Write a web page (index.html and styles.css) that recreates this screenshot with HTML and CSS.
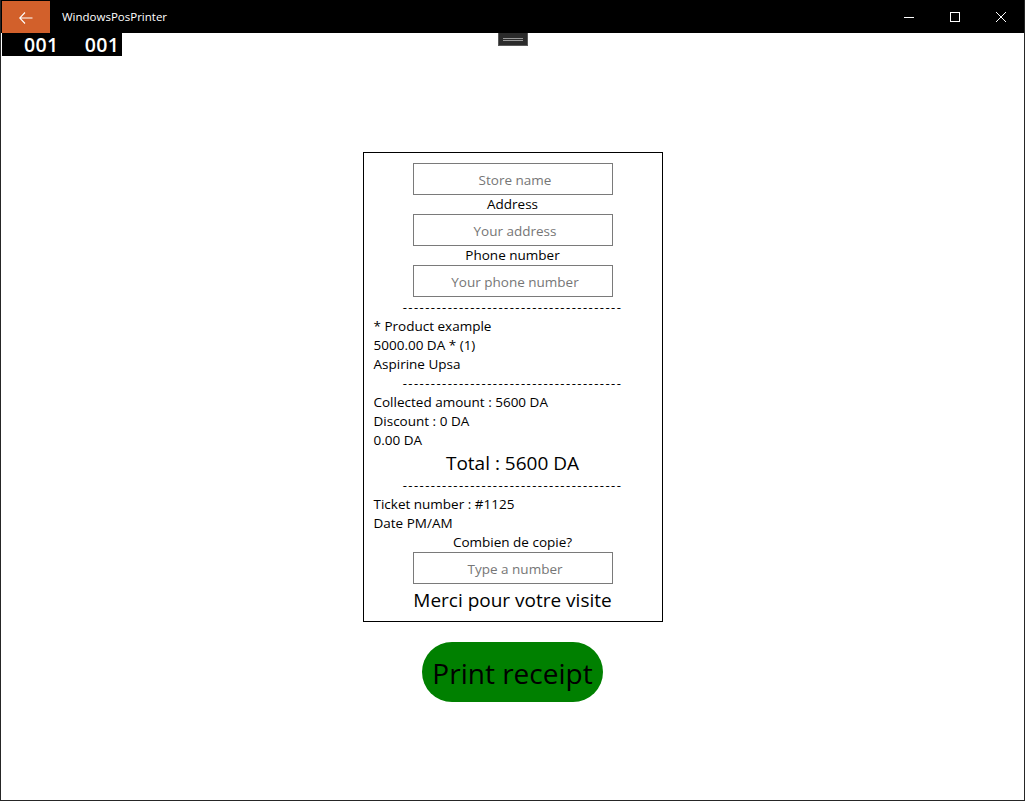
FILE: index.html
```html
<!DOCTYPE html>
<html>
<head>
<meta charset="utf-8">
<link rel="stylesheet" href="styles.css">
</head>
<body>
<div class="window">
  <header class="titlebar">
    <div class="back">
      <svg width="14" height="12" viewBox="0 0 14 12"><path d="M6 0.5 L0.7 6 L6 11.5 M0.7 6 H13.5" fill="none" stroke="#fff" stroke-width="1.1"/></svg>
    </div>
    <div class="title">WindowsPosPrinter</div>
    <div class="controls">
      <div class="ctl"><svg width="12" height="12" viewBox="0 0 12 12"><path d="M1 6.5 H11" stroke="#fff" stroke-width="1"/></svg></div>
      <div class="ctl"><svg width="12" height="12" viewBox="0 0 12 12"><rect x="1.5" y="1.5" width="9" height="9" fill="none" stroke="#fff" stroke-width="1"/></svg></div>
      <div class="ctl"><svg width="12" height="12" viewBox="0 0 12 12"><path d="M1 1 L11 11 M11 1 L1 11" stroke="#fff" stroke-width="1"/></svg></div>
    </div>
  </header>
  <main class="content">
    <div class="counter"><span>001</span><span>001</span></div>
    <div class="handle"><i></i><i></i></div>

    <section class="receipt">
      <div class="field">Store name</div>
      <div class="label">Address</div>
      <div class="field">Your address</div>
      <div class="label">Phone number</div>
      <div class="field">Your phone number</div>
      <div class="dashes first">---------------------------------------</div>
      <div class="line">* Product example</div>
      <div class="line">5000.00 DA * (1)</div>
      <div class="line">Aspirine Upsa</div>
      <div class="dashes">---------------------------------------</div>
      <div class="line">Collected amount : 5600 DA</div>
      <div class="line">Discount : 0 DA</div>
      <div class="line">0.00 DA</div>
      <div class="big total">Total : 5600 DA</div>
      <div class="dashes">---------------------------------------</div>
      <div class="line">Ticket number : #1125</div>
      <div class="line">Date PM/AM</div>
      <div class="label">Combien de copie?</div>
      <div class="field">Type a number</div>
      <div class="big thanks">Merci pour votre visite</div>
    </section>

    <button class="print">Print receipt</button>
  </main>
</div>
</body>
</html>
```

FILE: styles.css
```css
* { box-sizing: border-box; }
html, body { margin: 0; padding: 0; }
body {
  width: 1025px;
  height: 801px;
  overflow: hidden;
  background: #fff;
  font-family: "Open Sans", "Noto Sans", sans-serif;
}
.window {
  width: 1025px;
  height: 801px;
  border: 1px solid #262626;
  border-top: none;
  display: flex;
  flex-direction: column;
  background: #fff;
}
.titlebar {
  height: 33px;
  flex: none;
  background: #000;
  display: flex;
  align-items: stretch;
  padding-top: 1px;
}
.back {
  width: 48px;
  margin-left: 1px;
  background: #d2602b;
  display: flex;
  align-items: center;
  justify-content: center;
  padding-top: 1px;
}
.title {
  color: #fff;
  font-size: 11.5px;
  margin-left: 12px;
  display: flex;
  align-items: center;
  padding-bottom: 1px;
}
.controls {
  margin-left: auto;
  display: flex;
}
.ctl {
  width: 46px;
  display: flex;
  align-items: center;
  justify-content: center;
}
.content {
  position: relative;
  flex: 1;
  display: flex;
  flex-direction: column;
  align-items: center;
  padding-top: 119px;
}
.counter {
  position: absolute;
  left: 1px;
  top: 0;
  width: 120px;
  height: 23px;
  background: #000;
  color: #fff;
  font-size: 19.5px;
  font-weight: 600;
  display: flex;
  align-items: center;
  padding-left: 22px;
  gap: 26px;
  letter-spacing: 0.4px;
}
.handle {
  position: absolute;
  left: 497px;
  top: 0;
  width: 30px;
  height: 13px;
  background: #2b2b2b;
  border: 1px solid #5a5a5a;
  border-top: none;
  display: flex;
  flex-direction: column;
  align-items: center;
  justify-content: center;
  gap: 1px;
}
.handle i {
  display: block;
  width: 20px;
  height: 1px;
  background: #9a9a9a;
}
.receipt {
  width: 300px;
  height: 470px;
  border: 1px solid #000;
  padding: 10px 10px 0;
  display: flex;
  flex-direction: column;
  align-items: center;
  font-size: 13.5px;
  color: #000;
}
.field {
  width: 200px;
  height: 32px;
  border: 1px solid #7a7a7a;
  color: #767676;
  display: flex;
  align-items: center;
  justify-content: center;
  flex: none;
  padding-left: 5px;
  padding-top: 1px;
}
.label {
  height: 19px;
  line-height: 19px;
  text-align: center;
}
.line {
  align-self: stretch;
  height: 19px;
  line-height: 19px;
}
.dashes {
  height: 19px;
  line-height: 19px;
  letter-spacing: 1.45px;
  font-size: 13px;
}
.dashes.first {
  margin-top: 1px;
}
.big {
  font-size: 19px;
  height: 26px;
  line-height: 26px;
}
.thanks {
  margin-top: 1px;
  height: 30px;
  line-height: 30px;
}
.print {
  margin-top: 20px;
  width: 181px;
  height: 60px;
  border: none;
  border-radius: 30px;
  background: #008000;
  color: #000;
  font-family: inherit;
  font-size: 28px;
  padding: 2px 0 0;
}
```
